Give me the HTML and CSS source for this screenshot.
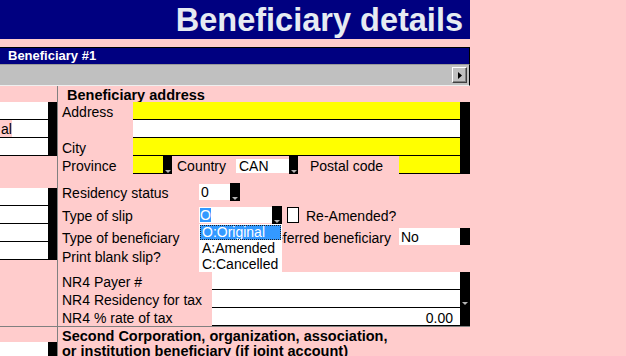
FILE: index.html
```html
<!DOCTYPE html>
<html>
<head>
<meta charset="utf-8">
<title>Beneficiary details</title>
<link rel="stylesheet" href="styles.css">
</head>
<body>
<div class="sheet">
  <div class="title">Beneficiary details</div>
  <div class="bar">Beneficiary #1</div>
  <div class="tool">
    <div class="scroll"><svg width="4" height="7" viewBox="0 0 4 7"><polygon points="0,0 4,3.5 0,7" fill="#000"/></svg></div>
  </div>

  <div class="sec upper">
    <div class="lcol">
      <div class="lblock b1">
        <div class="lrows">
          <div class="lrow"></div>
          <div class="lrow"><span class="lpink">al</span></div>
          <div class="lrow"></div>
        </div>
        <div class="lbb"></div>
      </div>
      <div class="lblock b2">
        <div class="lrows">
          <div class="lrow"></div>
          <div class="lrow"></div>
          <div class="lrow"></div>
          <div class="lrow"></div>
        </div>
        <div class="lbb"></div>
      </div>
    </div>

    <div class="rcol">
      <div class="head">Beneficiary address</div>
      <div class="addr">
        <div class="arows">
          <div class="row"><span class="lab w75">Address</span><span class="fld yel"></span></div>
          <div class="row"><span class="lab w75"></span><span class="fld wht"></span></div>
          <div class="row"><span class="lab w75">City</span><span class="fld yel"></span></div>
          <div class="row">
            <span class="lab w75">Province</span>
            <span class="fld yel prov"></span>
            <span class="btn"><svg width="6" height="3" viewBox="0 0 6 3"><polygon points="0,0 6,0 3,3" fill="#B4B4B4"/></svg></span>
            <span class="lab country">Country</span>
            <span class="box can">CAN</span>
            <span class="btn"><svg width="6" height="3" viewBox="0 0 6 3"><polygon points="0,0 6,0 3,3" fill="#B4B4B4"/></svg></span>
            <span class="lab postal">Postal code</span>
            <span class="fld yel"></span>
          </div>
        </div>
        <div class="rbb"></div>
      </div>

      <div class="row res">
        <span class="lab w141">Residency status</span>
        <span class="box zero">0</span>
        <span class="btn b10"><svg width="6" height="3" viewBox="0 0 6 3"><polygon points="0,0 6,0 3,3" fill="#B4B4B4"/></svg></span>
      </div>

      <div class="row slip">
        <span class="lab w141">Type of slip</span>
        <span class="dd">
          <span class="sbox"><span class="sel">O</span></span>
          <span class="btn b10"><svg width="6" height="3" viewBox="0 0 6 3"><polygon points="0,0 6,0 3,3" fill="#B4B4B4"/></svg></span>
          <span class="list">
            <span class="opt on">O:Original</span>
            <span class="opt">A:Amended</span>
            <span class="opt">C:Cancelled</span>
          </span>
        </span>
        <span class="chk"></span>
        <span class="lab ream">Re-Amended?</span>
      </div>

      <div class="row ben">
        <span class="lab w203">Type of beneficiary</span>
        <span class="lab pref">Preferred beneficiary</span>
        <span class="box no">No</span>
        <span class="btn b10 nob"></span>
      </div>

      <div class="row prt">
        <span class="lab">Print blank slip?</span>
      </div>

      <div class="nr4">
        <div class="nrows">
          <div class="row"><span class="lab w154">NR4 Payer #</span><span class="fld wht"></span></div>
          <div class="row"><span class="lab w154">NR4 Residency for tax</span><span class="fld wht"></span></div>
          <div class="row"><span class="lab w154">NR4 % rate of tax</span><span class="fld wht num">0.00</span></div>
        </div>
        <div class="rbb nbb"><svg width="6" height="3" viewBox="0 0 6 3"><polygon points="0,0 6,0 3,3" fill="#B4B4B4"/></svg></div>
      </div>
    </div>
  </div>

  <div class="sec lower">
    <div class="lcol">
      <div class="lblock b3">
        <div class="lrows"><div class="lrow"></div></div>
        <div class="lbb"></div>
      </div>
    </div>
    <div class="rcol">
      <div class="sec2">Second Corporation, organization, association,<br>or institution beneficiary (if joint account)</div>
    </div>
  </div>
</div>
</body>
</html>
```

FILE: styles.css
```css
body {
  margin: 0;
  background: #FFCCCC;
  font-family: "Liberation Sans", Arial, sans-serif;
  font-size: 14px;
  color: #000;
}

.sheet {
  width: 470px;
}

.title {
  height: 39px;
  box-sizing: border-box;
  padding-top: 1px;
  padding-right: 7px;
  margin-bottom: 8px;
  background: #000080;
  color: #E6EBF2;
  font-weight: bold;
  font-size: 32.5px;
  line-height: 38px;
  text-align: right;
  white-space: nowrap;
  overflow: hidden;
}

.bar {
  height: 17px;
  box-sizing: border-box;
  border-top: 1px solid #000;
  border-right: 1px solid #000;
  background: #000080;
  color: #fff;
  font-weight: bold;
  font-size: 13px;
  line-height: 16px;
  padding-left: 8px;
}

.tool {
  height: 22px;
  box-sizing: border-box;
  background: #C0C0C0;
  border-top: 1px solid #9A9A9A;
  border-bottom: 1px solid #EFEFEF;
  border-right: 1px solid #000;
  display: flex;
  justify-content: flex-end;
  align-items: center;
  padding-right: 2px;
}

.scroll {
  width: 15px;
  height: 16px;
  box-sizing: border-box;
  border: 1px solid;
  border-color: #fff #404040 #404040 #fff;
  box-shadow: inset -1px -1px #808080;
  background: #C0C0C0;
  display: flex;
  align-items: center;
  justify-content: center;
}

.sec {
  display: flex;
}

.upper {
  height: 240px;
}

.lower {
  height: 30px;
  border-top: 1px solid #808080;
  overflow: hidden;
}

.lcol {
  width: 58px;
  flex: none;
  box-sizing: border-box;
  border-right: 1px solid #808080;
}

.rcol {
  flex: 1;
  min-width: 0;
}

/* left column */
.lblock {
  display: flex;
}
.b1 { margin-top: 16px; }
.b2 { margin-top: 32px; }
.b3 { margin-top: 15px; height: 20px; }

.lrows {
  width: 48px;
  flex: none;
}

.lrow {
  height: 18px;
  box-sizing: border-box;
  background: #fff;
  border-bottom: 1px solid #000;
  display: flex;
}

.b3 .lrow {
  height: 20px;
  border-bottom: 0;
}

.lbb {
  width: 9px;
  background: #000;
  flex: none;
}

.lpink {
  width: 12px;
  background: #FFCCCC;
  line-height: 16px;
  padding-top: 1px;
  padding-left: 1px;
  box-sizing: border-box;
  overflow: hidden;
  white-space: nowrap;
}

/* right column */
.head {
  height: 16px;
  line-height: 18px;
  font-weight: bold;
  font-size: 14.5px;
  padding-left: 9px;
  white-space: nowrap;
}

.addr,
.nr4 {
  display: flex;
}

.arows,
.nrows {
  flex: 1;
  min-width: 0;
}

.rbb {
  width: 10px;
  flex: none;
  background: #000;
}

.row {
  display: flex;
  align-items: center;
  height: 18px;
}

.lab {
  flex: none;
  box-sizing: border-box;
  padding-left: 4px;
  padding-top: 2px;
  line-height: 16px;
  white-space: nowrap;
}

.w75 { width: 75px; }
.w141 { width: 141px; }
.w154 { width: 154px; }
.w203 { width: 203px; }

.fld {
  flex: 1;
  align-self: stretch;
  border-bottom: 1px solid #000;
}

.yel { background: #FFFF00; }
.wht { background: #fff; }

.prov {
  flex: none;
  width: 30px;
}

.btn {
  flex: none;
  width: 9px;
  align-self: stretch;
  box-sizing: border-box;
  padding-bottom: 1px;
  background: #000;
  display: flex;
  align-items: flex-end;
  justify-content: center;
}

.b10 { width: 10px; }

.country {
  width: 64px;
  padding-left: 5px;
}

.postal {
  width: 101px;
  padding-left: 12px;
}

.box {
  flex: none;
  box-sizing: border-box;
  background: #fff;
  white-space: nowrap;
}

.can {
  width: 53px;
  height: 14px;
  line-height: 14px;
  padding-left: 3px;
  align-self: flex-end;
  margin-bottom: 1px;
}

.res { margin-top: 9px; }

.zero {
  width: 31px;
  height: 16px;
  line-height: 16px;
  padding-left: 2px;
}

.slip { margin-top: 5px; }

.dd {
  display: flex;
  align-items: center;
  align-self: stretch;
  position: relative;
}

.sbox {
  width: 73px;
  height: 16px;
  box-sizing: border-box;
  padding: 1px;
  background: #fff;
  display: flex;
}

.sel {
  width: 11px;
  height: 14px;
  line-height: 14px;
  background: #3399FF;
  color: #fff;
}

.list {
  position: absolute;
  left: 0;
  top: 18px;
  width: 83px;
  background: #fff;
  z-index: 2;
  display: flex;
  flex-direction: column;
}

.opt {
  height: 16px;
  line-height: 16px;
  padding-left: 3px;
  white-space: nowrap;
}

.opt.on {
  height: 15px;
  line-height: 15px;
  margin: 1px 1px 0;
  padding-left: 2px;
  background: #3399FF;
  color: #fff;
  outline: 1px dotted #222;
  outline-offset: -1px;
}

.chk {
  flex: none;
  width: 12px;
  height: 16px;
  box-sizing: border-box;
  margin-left: 5px;
  border: 1px solid #000;
  background: #fff;
}

.ream {
  margin-left: 7px;
  padding-left: 0;
}

.ben { margin-top: 4px; }

.pref {
  width: 138px;
  padding-left: 0;
}

.no {
  width: 61px;
  height: 17px;
  line-height: 16px;
  padding-top: 1px;
  padding-left: 2px;
  align-self: flex-start;
}

.nob {
  align-self: flex-start;
  height: 17px;
}

.prt { height: 19px; }

.nr4 { margin-top: 7px; }

.num {
  text-align: right;
  padding-right: 7px;
  line-height: 18px;
  padding-top: 1px;
  box-sizing: border-box;
}

.nbb {
  display: flex;
  flex-direction: column;
  align-items: center;
}

.nbb svg {
  margin-top: 30px;
}

.sec2 {
  font-weight: bold;
  font-size: 14.5px;
  line-height: 15px;
  padding: 2px 0 0 4px;
  white-space: nowrap;
}
```
